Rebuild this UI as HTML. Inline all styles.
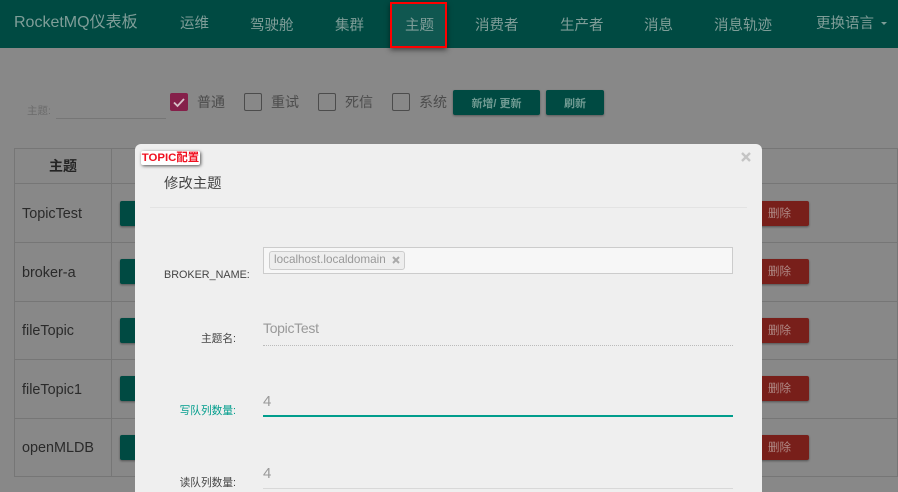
<!DOCTYPE html>
<html><head><meta charset="utf-8">
<style>
html,body{margin:0;padding:0;width:898px;height:492px;overflow:hidden}
body{position:relative;background:#888;font-family:"Liberation Sans","Noto Sans CJK SC",sans-serif}
.a{position:absolute;white-space:nowrap;line-height:1}
.nav{font-size:14.5px;color:#7f9d98}
.hd{position:absolute;left:0;top:0;width:898px;height:48px;background:#004a42}
.line{position:absolute;background:#767676}
.cb{position:absolute;top:93px;width:16px;height:16px;border:1px solid #4c4c4c;border-radius:2px;box-sizing:content-box}
.lb{top:95px;font-size:14px;color:#4c4c4c}
.btn{position:absolute;background:#004a42;border-radius:2px;box-shadow:0 1px 2px rgba(0,0,0,.35);color:#6f9a92;font-size:11px;text-align:center;font-weight:bold}
.g{position:absolute;left:120px;width:30px;height:25px;background:#004a42;border-radius:2px;box-shadow:0 1px 2px rgba(0,0,0,.4)}
.r{position:absolute;left:750px;width:59px;height:25px;background:#781f1a;border-radius:2px;box-shadow:0 1px 2px rgba(0,0,0,.4);color:#b08a86;font-size:11.5px;line-height:27px;padding-left:18px;box-sizing:border-box}
.t{font-size:14.4px;color:#2a2a2a;left:22px}
.modal{position:absolute;left:135px;top:144px;width:627px;height:348px;background:#efefef;border-radius:6px 6px 0 0}
.fl{font-size:10.7px;color:#444;text-align:right;width:110px}
.val{font-size:14px;color:#999;font-weight:normal}
</style></head><body>
<div class="hd"></div>
<div class="a" style="left:14px;top:15px;font-size:16px;color:#7f9d98">RocketMQ仪表板</div>
<div class="a nav" style="left:180px;top:17px">运维</div>
<div class="a nav" style="left:250px;top:19px">驾驶舱</div>
<div class="a nav" style="left:335px;top:19px">集群</div>
<div class="a" style="left:390px;top:2px;width:57px;height:46px;background:#105750;box-sizing:border-box;border:2px solid #f00;box-shadow:0 2px 5px rgba(0,0,0,.5)"></div>
<div class="a nav" style="left:405px;top:19px">主题</div>
<div class="a nav" style="left:475px;top:19px">消费者</div>
<div class="a nav" style="left:560px;top:19px">生产者</div>
<div class="a nav" style="left:644px;top:19px">消息</div>
<div class="a nav" style="left:714px;top:19px">消息轨迹</div>
<div class="a nav" style="left:816px;top:17px">更换语言</div>
<div class="a" style="left:881px;top:22px;width:0;height:0;border-left:3px solid transparent;border-right:3px solid transparent;border-top:3px solid #7f9d98"></div>

<div class="a" style="left:27px;top:106px;font-size:10.5px;color:#6c6c6c">主题:</div>
<div class="a" style="left:56px;top:118px;width:110px;height:1px;background:#767676"></div>
<div class="a" style="left:170px;top:93px;width:18px;height:18px;background:#85204a;border-radius:2px"></div>
<svg class="a" style="left:170px;top:93px" width="18" height="18"><path d="M4 9.5L7.5 13L14 6" fill="none" stroke="#d8c0c8" stroke-width="1.8"/></svg>
<div class="a lb" style="left:197px">普通</div>
<div class="cb" style="left:244px"></div><div class="a lb" style="left:271px">重试</div>
<div class="cb" style="left:318px"></div><div class="a lb" style="left:345px">死信</div>
<div class="cb" style="left:392px"></div><div class="a lb" style="left:419px">系统</div>
<div class="btn" style="left:453px;top:90px;width:87px;height:25px;line-height:28px">新增/ 更新</div>
<div class="btn" style="left:546px;top:90px;width:58px;height:25px;line-height:28px">刷新</div>

<div class="line" style="left:14px;top:148px;width:884px;height:1px"></div>
<div class="line" style="left:14px;top:183px;width:884px;height:1px"></div>
<div class="line" style="left:14px;top:242px;width:884px;height:1px"></div>
<div class="line" style="left:14px;top:301px;width:884px;height:1px"></div>
<div class="line" style="left:14px;top:359px;width:884px;height:1px"></div>
<div class="line" style="left:14px;top:418px;width:884px;height:1px"></div>
<div class="line" style="left:14px;top:476px;width:884px;height:1px"></div>
<div class="line" style="left:14px;top:148px;width:1px;height:329px"></div>
<div class="line" style="left:111px;top:148px;width:1px;height:329px"></div>
<div class="line" style="left:897px;top:148px;width:1px;height:329px"></div>

<div class="a" style="left:49px;top:159px;font-size:14px;font-weight:bold;color:#242424">主题</div>
<div class="a t" style="top:207px">TopicTest</div>
<div class="a t" style="top:266px">broker-a</div>
<div class="a t" style="top:324px">fileTopic</div>
<div class="a t" style="top:383px">fileTopic1</div>
<div class="a t" style="top:441px">openMLDB</div>
<div class="g" style="top:201px"></div><div class="g" style="top:259px"></div><div class="g" style="top:318px"></div><div class="g" style="top:376px"></div><div class="g" style="top:435px"></div>
<div class="r" style="top:201px">删除</div><div class="r" style="top:259px">删除</div><div class="r" style="top:318px">删除</div><div class="r" style="top:376px">删除</div><div class="r" style="top:435px">删除</div>

<div class="modal"></div>
<div class="a" style="left:141px;top:151px;width:59px;height:14px;background:#fff;border-radius:2px;box-shadow:1px 1px 3px rgba(0,0,0,.65);color:#f01020;font-size:11.4px;font-weight:bold;line-height:14px;text-align:center">TOPIC配置</div>
<div class="a" style="left:164px;top:177px;font-size:14.4px;color:#444">修改主题</div>
<div class="a" style="left:150px;top:207px;width:597px;height:1px;background:#e3e3e3"></div>
<svg class="a" style="left:741px;top:152px" width="10" height="10"><path d="M1 1L9 9M9 1L1 9" stroke="#c4c4c4" stroke-width="2.4" fill="none"/></svg>

<div class="a" style="left:164px;top:270px;font-size:10.8px;color:#444">BROKER_NAME:</div>
<div class="a" style="left:263px;top:247px;width:470px;height:27px;box-sizing:border-box;background:#f7f7f7;border:1px solid #ccc"></div>
<div class="a" style="left:269px;top:251px;width:136px;height:19px;box-sizing:border-box;background:#eee;border:1px solid #ccc;border-radius:3px"></div>
<div class="a" style="left:274px;top:254px;font-size:11.7px;color:#999">localhost.localdomain</div>
<svg class="a" style="left:392px;top:256px" width="8" height="8"><path d="M1 1L7 7M7 1L1 7" stroke="#aaa" stroke-width="2" fill="none"/></svg>

<div class="a fl" style="left:126px;top:334px">主题名:</div>
<div class="a val" style="left:263px;top:321px;letter-spacing:-.3px">TopicTest</div>
<div class="a" style="left:263px;top:345px;width:470px;height:0;border-top:1px dotted #bbb"></div>

<div class="a fl" style="left:126px;top:406px;color:#009d8c">写队列数量:</div>
<div class="a val" style="left:263px;top:394px;font-size:15px">4</div>
<div class="a" style="left:263px;top:415px;width:470px;height:2px;background:#009d8c"></div>

<div class="a fl" style="left:126px;top:478px">读队列数量:</div>
<div class="a val" style="left:263px;top:466px;font-size:15px">4</div>
<div class="a" style="left:263px;top:488px;width:470px;height:1px;background:#d8d8d8"></div>
</body></html>
